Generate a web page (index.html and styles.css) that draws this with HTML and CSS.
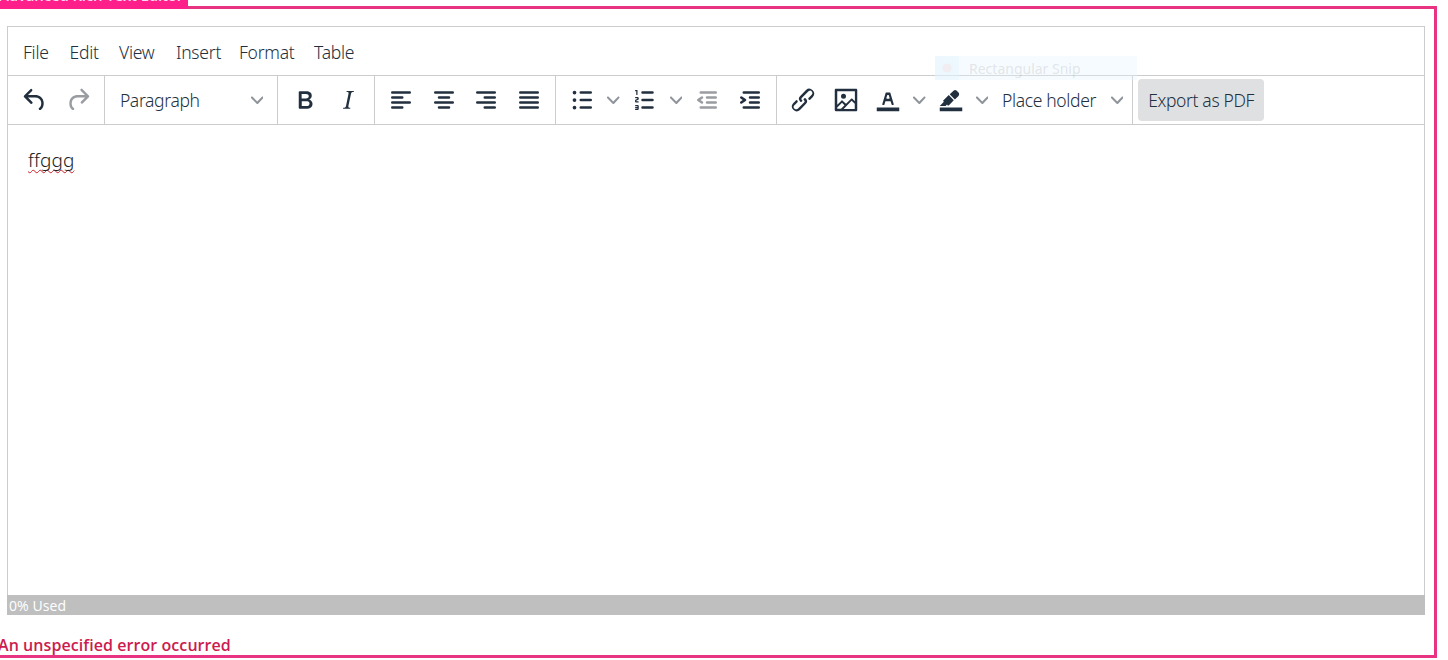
FILE: index.html
```
<!DOCTYPE html>
<html lang="en">
<head>
    <meta charset="UTF-8">
    <meta name="viewport" content="width=device-width, initial-scale=1.0">
    <title>Advanced Rich Text Editor</title>
    <link rel="stylesheet" href="styles.css">
</head>
<body>
    <div class="component">
        <div class="component-label"><span>Advanced Rich Text Editor</span></div>

        <div class="editor">
            <div class="menubar">
                <span class="menu-file">File</span>
                <span class="menu-edit">Edit</span>
                <span class="menu-view">View</span>
                <span class="menu-insert">Insert</span>
                <span class="menu-format">Format</span>
                <span class="menu-table">Table</span>
            </div>

            <div class="toolbar">
                <div class="group">
                    <button class="btn"><svg class="icon" viewBox="0 0 24 24"><path d="M6.4 8H12c3.7 0 6.2 2 6.8 5.1.6 2.7-.4 5.6-2.3 6.8a1 1 0 0 1-1-1.8c1.1-.6 1.8-2.7 1.4-4.6-.5-2.1-2.1-3.5-4.9-3.5H6.4l3.3 3.3a1 1 0 1 1-1.4 1.4l-5-5a1 1 0 0 1 0-1.4l5-5a1 1 0 0 1 1.4 1.4L6.4 8Z"/></svg></button>
                    <button class="btn disabled"><svg class="icon" viewBox="0 0 24 24"><path d="M17.6 10H12c-2.8 0-4.4 1.4-4.9 3.5-.4 2 .3 4 1.4 4.6a1 1 0 1 1-1 1.8c-2-1.2-2.9-4.1-2.3-6.8.6-3 3-5.1 6.8-5.1h5.6l-3.3-3.3a1 1 0 1 1 1.4-1.4l5 5a1 1 0 0 1 0 1.4l-5 5a1 1 0 0 1-1.4-1.4l3.3-3.3Z"/></svg></button>
                </div>
                <div class="group">
                    <button class="select block-select"><span>Paragraph</span><svg class="chevron" viewBox="0 0 10 10"><path d="M8.7 2.2c.3-.3.8-.3 1 0 .4.4.4.9 0 1.2L5.7 7.8c-.3.3-.9.3-1.2 0L.2 3.4a.8.8 0 0 1 0-1.2c.3-.3.8-.3 1.1 0L5 6l3.7-3.8Z"/></svg></button>
                </div>
                <div class="group group-style">
                    <button class="btn"><svg class="icon" viewBox="0 0 24 24"><path d="M7.8 19c-.3 0-.5 0-.6-.2l-.2-.5V5.7c0-.2 0-.4.2-.5l.6-.2h5c1.5 0 2.7.3 3.5 1 .7.6 1.1 1.4 1.1 2.5a3 3 0 0 1-.6 1.9c-.4.6-1 1-1.6 1.2.4.1.9.3 1.3.6s.8.7 1 1.2c.4.4.5 1 .5 1.6 0 1.3-.4 2.3-1.3 3-.8.7-2.1 1-3.8 1H7.8Zm5-8.3c.6 0 1.2-.1 1.6-.5.4-.3.6-.7.6-1.3 0-1.1-.8-1.7-2.3-1.7H9.3v3.5h3.4Zm.5 6c.7 0 1.3-.1 1.7-.4.4-.4.6-.9.6-1.5s-.2-1-.7-1.4c-.4-.3-1-.4-2-.4H9.4v3.8h4Z"/></svg></button>
                    <button class="btn"><svg class="icon" viewBox="0 0 24 24"><path d="m16.7 4.7-.1.9h-.3c-.6 0-1 0-1.4.3-.3.3-.4.6-.5 1.1l-2.1 9.8v.6c0 .5.4.8 1.4.8h.2l-.2.8H8l.2-.8h.2c1.1 0 1.8-.5 2-1.5l2-9.8.1-.5c0-.6-.4-.8-1.4-.8h-.3l.2-.9h5.8Z"/></svg></button>
                </div>
                <div class="group">
                    <button class="btn"><svg class="icon" viewBox="0 0 24 24"><path d="M5 5h14a1 1 0 0 1 0 2H5a1 1 0 1 1 0-2Zm0 4h8a1 1 0 0 1 0 2H5a1 1 0 1 1 0-2Zm0 8h8a1 1 0 0 1 0 2H5a1 1 0 0 1 0-2Zm0-4h14a1 1 0 0 1 0 2H5a1 1 0 0 1 0-2Z"/></svg></button>
                    <button class="btn"><svg class="icon" viewBox="0 0 24 24"><path d="M5 5h14a1 1 0 0 1 0 2H5a1 1 0 1 1 0-2Zm3 4h8a1 1 0 0 1 0 2H8a1 1 0 1 1 0-2Zm0 8h8a1 1 0 0 1 0 2H8a1 1 0 0 1 0-2Zm-3-4h14a1 1 0 0 1 0 2H5a1 1 0 0 1 0-2Z"/></svg></button>
                    <button class="btn"><svg class="icon" viewBox="0 0 24 24"><path d="M5 5h14a1 1 0 0 1 0 2H5a1 1 0 1 1 0-2Zm6 4h8a1 1 0 0 1 0 2h-8a1 1 0 0 1 0-2Zm0 8h8a1 1 0 0 1 0 2h-8a1 1 0 0 1 0-2Zm-6-4h14a1 1 0 0 1 0 2H5a1 1 0 0 1 0-2Z"/></svg></button>
                    <button class="btn"><svg class="icon" viewBox="0 0 24 24"><path d="M5 5h14a1 1 0 0 1 0 2H5a1 1 0 1 1 0-2Zm0 4h14a1 1 0 0 1 0 2H5a1 1 0 1 1 0-2Zm0 4h14a1 1 0 0 1 0 2H5a1 1 0 0 1 0-2Zm0 4h14a1 1 0 0 1 0 2H5a1 1 0 0 1 0-2Z"/></svg></button>
                </div>
                <div class="group">
                    <button class="btn"><svg class="icon" viewBox="0 0 24 24"><path d="M11 5h8a1 1 0 0 1 0 2h-8a1 1 0 0 1 0-2Zm0 6h8a1 1 0 0 1 0 2h-8a1 1 0 0 1 0-2Zm0 6h8a1 1 0 0 1 0 2h-8a1 1 0 0 1 0-2ZM4.5 6a1.5 1.5 0 1 1 3 0 1.5 1.5 0 0 1-3 0Zm0 6a1.5 1.5 0 1 1 3 0 1.5 1.5 0 0 1-3 0Zm0 6a1.5 1.5 0 1 1 3 0 1.5 1.5 0 0 1-3 0Z"/></svg></button>
                    <button class="split"><svg class="chevron" viewBox="0 0 10 10"><path d="M8.7 2.2c.3-.3.8-.3 1 0 .4.4.4.9 0 1.2L5.7 7.8c-.3.3-.9.3-1.2 0L.2 3.4a.8.8 0 0 1 0-1.2c.3-.3.8-.3 1.1 0L5 6l3.7-3.8Z"/></svg></button>
                    <button class="btn numlist"><svg class="icon" viewBox="0 0 24 24"><path d="M10 17h8a1 1 0 0 1 0 2h-8a1 1 0 0 1 0-2Zm0-6h8a1 1 0 0 1 0 2h-8a1 1 0 0 1 0-2Zm0-6h8a1 1 0 0 1 0 2h-8a1 1 0 1 1 0-2ZM6 4v3.5a.5.5 0 0 1-1 0V5h-.5a.5.5 0 0 1 0-1H6Zm-1 8.8.2.2h1.3a.5.5 0 0 1 0 1H4.6a1 1 0 0 1-.6-1v-.4c0-.4.2-.8.6-1l1.1-.5.2-.3-.2-.3H4.5a.5.5 0 0 1 0-1h1.9c.3.2.6.6.6 1v.4c0 .4-.2.8-.6 1l-1.2.5-.2.4ZM7 17v2c0 .6-.4 1-1 1H4.5a.5.5 0 0 1 0-1h1.2c.2 0 .3-.1.3-.3v-.2H4.5a.5.5 0 0 1 0-1H6v-.4l-.3-.1H4.5a.5.5 0 0 1 0-1H6c.6 0 1 .4 1 1Z"/></svg></button>
                    <button class="split"><svg class="chevron" viewBox="0 0 10 10"><path d="M8.7 2.2c.3-.3.8-.3 1 0 .4.4.4.9 0 1.2L5.7 7.8c-.3.3-.9.3-1.2 0L.2 3.4a.8.8 0 0 1 0-1.2c.3-.3.8-.3 1.1 0L5 6l3.7-3.8Z"/></svg></button>
                    <button class="btn disabled"><svg class="icon" viewBox="0 0 24 24"><path d="M7 5h12a1 1 0 0 1 0 2H7a1 1 0 1 1 0-2Zm5 4h7a1 1 0 0 1 0 2h-7a1 1 0 0 1 0-2Zm0 4h7a1 1 0 0 1 0 2h-7a1 1 0 0 1 0-2Zm-5 4h12a1 1 0 0 1 0 2H7a1 1 0 0 1 0-2Zm1.6-3.8a1 1 0 0 1-1.2 1.6l-3-2a1 1 0 0 1 0-1.6l3-2a1 1 0 0 1 1.2 1.6L6.8 12l1.8 1.2Z"/></svg></button>
                    <button class="btn"><svg class="icon" viewBox="0 0 24 24"><path d="M7 5h12a1 1 0 0 1 0 2H7a1 1 0 1 1 0-2Zm5 4h7a1 1 0 0 1 0 2h-7a1 1 0 0 1 0-2Zm0 4h7a1 1 0 0 1 0 2h-7a1 1 0 0 1 0-2Zm-5 4h12a1 1 0 0 1 0 2H7a1 1 0 0 1 0-2Zm-2.6-3.8L6.2 12l-1.8-1.2a1 1 0 0 1 1.2-1.6l3 2a1 1 0 0 1 0 1.6l-3 2a1 1 0 1 1-1.2-1.6Z"/></svg></button>
                </div>
                <div class="group">
                    <button class="btn"><svg class="icon" viewBox="0 0 24 24"><path d="M6.2 12.3a1 1 0 0 1 1.4 1.4l-2 2a2 2 0 1 0 2.6 2.8l4.8-4.8a1 1 0 0 0 0-1.4 1 1 0 1 1 1.4-1.3 2.9 2.9 0 0 1 0 4L9.6 20a3.9 3.9 0 0 1-5.5-5.5l2-2Zm11.6-.6a1 1 0 0 1-1.4-1.4l2-2a2 2 0 1 0-2.6-2.8L11 10.3a1 1 0 0 0 0 1.4A1 1 0 1 1 9.6 13a2.9 2.9 0 0 1 0-4L14.4 4a3.9 3.9 0 0 1 5.5 5.5l-2 2Z"/></svg></button>
                    <button class="btn"><svg class="icon" viewBox="0 0 24 24"><path fill-rule="evenodd" d="m5 15.7 3.3-3.2c.3-.3.7-.3 1 0L12 15l4.1-4c.3-.4.8-.4 1 0l2 1.9V5H5v10.7ZM5 18V19h3l2.8-2.9-2-2L5 17.9Zm14-3-2.5-2.4-6.4 6.5H19v-4ZM4 3h16c.6 0 1 .4 1 1v16c0 .6-.4 1-1 1H4a1 1 0 0 1-1-1V4c0-.6.4-1 1-1Zm6 8a2 2 0 1 0 0-4 2 2 0 0 0 0 4Z"/></svg></button>
                    <button class="btn"><svg class="icon" viewBox="0 0 24 24"><path d="M3 18h18v3H3z"/><path d="M8.7 16h-.8a.5.5 0 0 1-.5-.6l2.7-9c.1-.3.3-.4.5-.4h2.8c.2 0 .4.1.5.4l2.7 9a.5.5 0 0 1-.5.6h-.8a.5.5 0 0 1-.4-.4l-.7-2.2c0-.3-.3-.4-.5-.4h-3.4c-.2 0-.4.1-.5.4l-.7 2.2c0 .3-.2.4-.4.4Zm2.6-7.6-.6 2a.5.5 0 0 0 .5.6h1.6a.5.5 0 0 0 .5-.6l-.6-2c0-.3-.3-.4-.5-.4h-.4c-.2 0-.4.1-.5.4Z"/></svg></button>
                    <button class="split"><svg class="chevron" viewBox="0 0 10 10"><path d="M8.7 2.2c.3-.3.8-.3 1 0 .4.4.4.9 0 1.2L5.7 7.8c-.3.3-.9.3-1.2 0L.2 3.4a.8.8 0 0 1 0-1.2c.3-.3.8-.3 1.1 0L5 6l3.7-3.8Z"/></svg></button>
                    <button class="btn"><svg class="icon" viewBox="0 0 24 24"><path d="M3 18h18v3H3z"/><path d="M7.7 16.7H3l3.3-3.3-.7-.8L10.2 8l4 4.1-4 4.2c-.2.2-.6.2-.8 0l-.6-.7-1.1 1.1Zm5-7.5L11 7.4l3-2.9a2 2 0 0 1 2.6 0L18 6c.7.7.7 2 0 2.7l-2.9 2.9-1.8-1.8-.5-.6Z"/></svg></button>
                    <button class="split"><svg class="chevron" viewBox="0 0 10 10"><path d="M8.7 2.2c.3-.3.8-.3 1 0 .4.4.4.9 0 1.2L5.7 7.8c-.3.3-.9.3-1.2 0L.2 3.4a.8.8 0 0 1 0-1.2c.3-.3.8-.3 1.1 0L5 6l3.7-3.8Z"/></svg></button>
                    <button class="select place-select"><span>Place holder</span><svg class="chevron" viewBox="0 0 10 10"><path d="M8.7 2.2c.3-.3.8-.3 1 0 .4.4.4.9 0 1.2L5.7 7.8c-.3.3-.9.3-1.2 0L.2 3.4a.8.8 0 0 1 0-1.2c.3-.3.8-.3 1.1 0L5 6l3.7-3.8Z"/></svg></button>
                </div>
                <div class="group">
                    <button class="export-btn"><span>Export as PDF</span></button>
                </div>
            </div>

            <div class="content"><p><span class="misspelled">ffggg</span></p></div>
        </div>

        <div class="usage">0% Used</div>
        <div class="error">An unspecified error occurred</div>
    </div>

    <div class="snip-hint"><span class="snip-icon"></span><span>Rectangular Snip</span></div>
</body>
</html>
```
FILE: styles.css
```
* {
    margin: 0;
    padding: 0;
    box-sizing: border-box;
}

body {
    height: 660px;
    overflow: hidden;
    background: #fff;
    font-family: "Open Sans", sans-serif;
}

.component {
    position: relative;
    width: 1447px;
    height: 652px;
    margin: 6px 0 0 -10px;
    padding: 17px 9px 0 14px;
    border: 3px solid #e83382;
}

/* tab sits on top of the frame, partly scrolled away */
.component-label {
    position: absolute;
    left: 0;
    bottom: 646px;
    width: 195px;
    height: 24px;
    padding-left: 6px;
    background: #ff1f8b;
    color: #fbd9f0;
    font-size: 15px;
    font-weight: 600;
    letter-spacing: -0.16px;
    line-height: 20px;
    white-space: nowrap;
}

.editor {
    width: 1418px;
    height: 569px;
    border: 1px solid #ccc;
    border-bottom: none;
    color: #222f3e;
    font-family: "Noto Sans", sans-serif;
}

.menubar {
    display: flex;
    height: 49px;
    padding-left: 15px;
    border-bottom: 1px solid #ccc;
    font-size: 17.5px;
    font-weight: 300;
    letter-spacing: -0.25px;
    line-height: 51px;
    white-space: nowrap;
}

.menu-file { width: 46.5px; }
.menu-edit { width: 49.5px; }
.menu-view { width: 57px; }
.menu-insert { width: 63px; }
.menu-format { width: 75px; }

.toolbar {
    display: flex;
    height: 49px;
    padding-left: 0.9px;
    border-bottom: 1px solid #ccc;
}

.group {
    display: flex;
    align-items: center;
    padding: 0 5px;
    border-right: 1px solid #ccc;
}

.group-style {
    padding-left: 5.7px;
}

.group:last-child {
    border-right: none;
}

button {
    display: flex;
    align-items: center;
    justify-content: center;
    height: 42px;
    border: none;
    border-radius: 4px;
    background: none;
    color: #222f3e;
    font-family: inherit;
    font-size: 17.5px;
    font-weight: 300;
    letter-spacing: -0.35px;
    white-space: nowrap;
}

.btn {
    width: 42.5px;
}

.numlist {
    padding-left: 1px;
}

.split {
    width: 20px;
}

.icon {
    flex: none;
    width: 30px;
    height: 30px;
    fill: #222f3e;
}

.disabled .icon {
    fill: #999ca1;
}

.chevron {
    width: 12.5px;
    height: 12.5px;
    fill: #8f949b;
}

.select {
    justify-content: space-between;
    padding: 0 9px 0 10px;
}

.block-select {
    width: 162.5px;
}

.place-select {
    width: 135px;
    padding-right: 4px;
}

.export-btn {
    width: 126px;
    background: #dfe0e2;
}

.content {
    padding: 20px;
    color: #222;
    font-size: 19px;
    font-weight: 300;
    line-height: 30px;
}

.misspelled {
    letter-spacing: 0.1px;
    text-decoration: underline wavy #d0202a 1px;
    text-decoration-skip-ink: none;
    text-underline-offset: 2px;
}

.usage {
    width: 1418px;
    height: 20px;
    padding-left: 2px;
    background: #bfbfbf;
    color: #fff;
    font-size: 14px;
    letter-spacing: 0.1px;
    line-height: 21px;
}

.error {
    margin: 18px 0 0 -9px;
    color: #cc1b4f;
    font-size: 16px;
    font-weight: 600;
    letter-spacing: 0.07px;
    line-height: 24px;
}

/* fading tooltip left over the toolbar */
.snip-hint {
    position: absolute;
    top: 56px;
    left: 935px;
    display: flex;
    align-items: center;
    width: 202px;
    height: 24px;
    background: rgba(225, 243, 253, 0.35);
    color: rgba(130, 120, 120, 0.18);
    font-family: "Noto Sans", sans-serif;
    font-size: 14px;
}

.snip-icon {
    width: 24px;
    height: 24px;
    margin-right: 10px;
    background: radial-gradient(circle at 50% 50%, #f1edf0 4px, rgba(225, 242, 255, 0.4) 5px);
}
```
